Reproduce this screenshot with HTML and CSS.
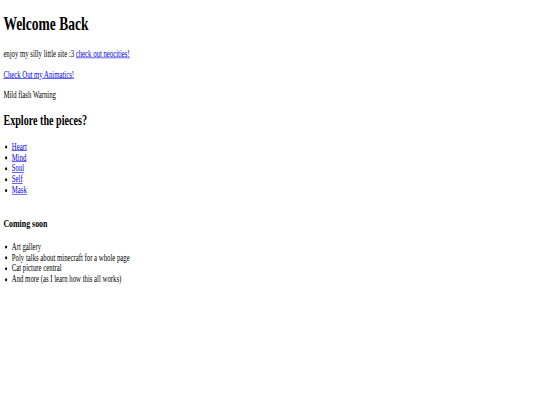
FILE: index.html
```html
<!DOCTYPE html>
<html>
<head>
<meta charset="utf-8">
<title>Welcome Back</title>
<link rel="stylesheet" href="styles.css">
</head>
<body>
<div class="frame">
  <div class="page">
    <h1>Welcome Back</h1>
    <p>enjoy my silly little site :3 <a href="#">check out neocities!</a></p>
    <p><a href="#">Check Out my Animatics!</a></p>
    <p>Mild flash Warning</p>
    <h2>Explore the pieces?</h2>
    <ul class="list pieces">
      <li><a href="#">Heart</a></li>
      <li><a href="#">Mind</a></li>
      <li><a href="#">Soul</a></li>
      <li><a href="#">Self</a></li>
      <li><a href="#">Mask</a></li>
    </ul>
    <h3>Coming soon</h3>
    <ul class="list">
      <li>Art gallery</li>
      <li>Poly talks about minecraft for a whole page</li>
      <li>Cat picture central</li>
      <li>And more (as I learn how this all works)</li>
    </ul>
  </div>
</div>
</body>
</html>
```
FILE: styles.css
```css
html, body {
  margin: 0;
  padding: 0;
  background: #ffffff;
  overflow: hidden;
}
.frame {
  width: 540px;
  height: 405px;
  overflow: hidden;
}
.page {
  display: flow-root;
  box-sizing: border-box;
  width: 1280px;
  padding: 0 8px;
  font-family: "Liberation Serif", "Times New Roman", serif;
  font-size: 16px;
  color: #000000;
  transform: scale(0.421875, 0.606);
  transform-origin: 0 0;
}
.page a {
  color: #0000ee;
}
.list {
  padding-left: 20px;
}
.pieces {
  margin-bottom: 34.4px;
}
```
